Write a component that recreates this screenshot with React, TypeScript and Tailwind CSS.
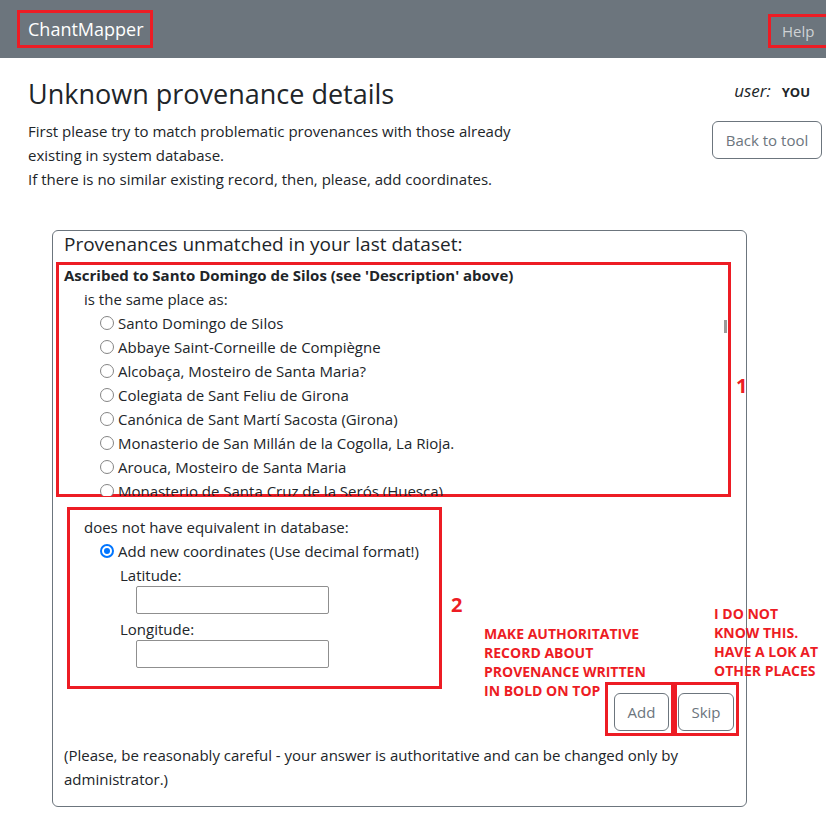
import React from "react";

const places = [
  "Santo Domingo de Silos",
  "Abbaye Saint-Corneille de Compiègne",
  "Alcobaça, Mosteiro de Santa Maria?",
  "Colegiata de Sant Feliu de Girona",
  "Canónica de Sant Martí Sacosta (Girona)",
  "Monasterio de San Millán de la Cogolla, La Rioja.",
  "Arouca, Mosteiro de Santa Maria",
  "Monasterio de Santa Cruz de la Serós (Huesca)",
];

const Radio = ({ checked = false }: { checked?: boolean }) =>
  checked ? (
    <span className="w-[14px] h-[14px] rounded-full border-2 border-[#0075ff] flex items-center justify-center shrink-0">
      <span className="w-[6px] h-[6px] rounded-full bg-[#0075ff]" />
    </span>
  ) : (
    <span className="w-[14px] h-[14px] rounded-full border border-[#858585] bg-white shrink-0" />
  );

export default function App() {
  return (
    <div className="min-h-screen bg-white text-[#212529] font-['Open_Sans','Noto_Sans',sans-serif] text-[15px] leading-[24px]">
      <nav className="h-[58px] bg-[#6c757d] flex items-center justify-between pl-[17px]">
        <div className="border-[3px] border-[#ed1c24] h-[38px] w-[136px] flex items-center pl-[8px] text-[18px] text-white">
          ChantMapper
        </div>
        <div className="border-[3px] border-r-0 border-[#ed1c24] h-[34px] w-[58px] mt-[4px] flex items-center pl-[11px] text-[#cfd2d5]">
          Help
        </div>
      </nav>

      <div className="flex justify-between pl-[28px] pr-[4px]">
        <div>
          <h1 className="mt-[19px] mb-[8px] text-[27px] leading-[34px] font-normal">
            Unknown provenance details
          </h1>
          <p>
            First please try to match problematic provenances with those already
            <br />
            existing in system database.
            <br />
            If there is no similar existing record, then, please, add coordinates.
          </p>
        </div>
        <div className="flex flex-col items-end">
          <div className="mt-[24px] pr-[12px] flex items-baseline gap-[11px] leading-[18px]">
            <span className="italic text-[17px]">user:</span>
            <span className="font-bold text-[13px]">YOU</span>
          </div>
          <button className="mt-[20px] h-[38px] w-[110px] border border-[#6c757d] rounded-[6px] text-[#6c757d]">
            Back to tool
          </button>
        </div>
      </div>

      <div className="relative ml-[52px] mt-[39px] w-[695px] border border-[#6c757d] rounded-[6px] pt-[1px] pb-[15px]">
        <h5 className="pl-[11px] text-[19px] leading-[24px]">
          Provenances unmatched in your last dataset:
        </h5>

        <div className="relative mt-[6px] ml-[3px] w-[675px] h-[235px] border-[3px] border-[#ed1c24] pl-[5px]">
          <div className="font-bold -mt-[2px]">
            Ascribed to Santo Domingo de Silos (see 'Description' above)
          </div>
          <div className="pl-[20px]">is the same place as:</div>
          <div className="h-[185px] overflow-hidden">
            {places.map((p) => (
              <div key={p} className="flex items-center gap-[4px] pl-[36px] h-[24px] whitespace-nowrap">
                <Radio />
                <span>{p}</span>
              </div>
            ))}
          </div>
          <div className="absolute top-[55px] right-[1px] w-[3px] h-[13px] bg-[#9a9a9a]" />
        </div>

        <div className="mt-[10px] ml-[14px] w-[375px] border-[3px] border-[#ed1c24] pl-[14px] pt-[5px] pb-[18px]">
          <div className="whitespace-nowrap">does not have equivalent in database:</div>
          <div className="flex items-center gap-[4px] pl-[16px] h-[24px] whitespace-nowrap">
            <Radio checked />
            <span>Add new coordinates (Use decimal format!)</span>
          </div>
          <div className="pl-[36px]">Latitude:</div>
          <input className="ml-[52px] block w-[193px] h-[28px] border border-[#8f8f8f] rounded-[2px] -mt-[1px]" />
          <div className="pl-[36px] mt-[3px]">Longitude:</div>
          <input className="ml-[52px] block w-[193px] h-[28px] border border-[#8f8f8f] rounded-[2px] -mt-[1px]" />
        </div>

        <div className="flex justify-end -mt-[7px] mr-[7px]">
          <div className="border-[3px] border-[#ed1c24] pl-[6px] pr-[2px] pt-[8px] pb-[2px]">
            <button className="h-[38px] w-[55px] border border-[#6c757d] rounded-[6px] text-[#6c757d]">
              Add
            </button>
          </div>
          <div className="border-[3px] border-[#ed1c24] pl-[1px] pr-[2px] pt-[8px] pb-[2px]">
            <button className="h-[38px] w-[56px] border border-[#6c757d] rounded-[6px] text-[#6c757d]">
              Skip
            </button>
          </div>
        </div>

        <p className="mt-[7px] pl-[11px] whitespace-nowrap">
          (Please, be reasonably careful - your answer is authoritative and can be changed only by
          <br />
          administrator.)
        </p>

        <div className="absolute left-[683px] top-[143px] text-[20px] leading-[24px] font-bold text-[#ed1c24]">
          1
        </div>
        <div className="absolute left-[398px] top-[362px] text-[20px] leading-[24px] font-bold text-[#ed1c24]">
          2
        </div>
        <div className="absolute left-[431px] top-[393px] w-[200px] text-[14px] leading-[19px] font-bold text-[#ed1c24] whitespace-nowrap">
          MAKE AUTHORITATIVE
          <br />
          RECORD ABOUT
          <br />
          PROVENANCE WRITTEN
          <br />
          IN BOLD ON TOP
        </div>
        <div className="absolute left-[661px] top-[373px] w-[120px] text-[14px] leading-[19px] font-bold text-[#ed1c24] whitespace-nowrap">
          I DO NOT
          <br />
          KNOW THIS.
          <br />
          HAVE A LOK AT
          <br />
          OTHER PLACES
        </div>
      </div>
    </div>
  );
}
